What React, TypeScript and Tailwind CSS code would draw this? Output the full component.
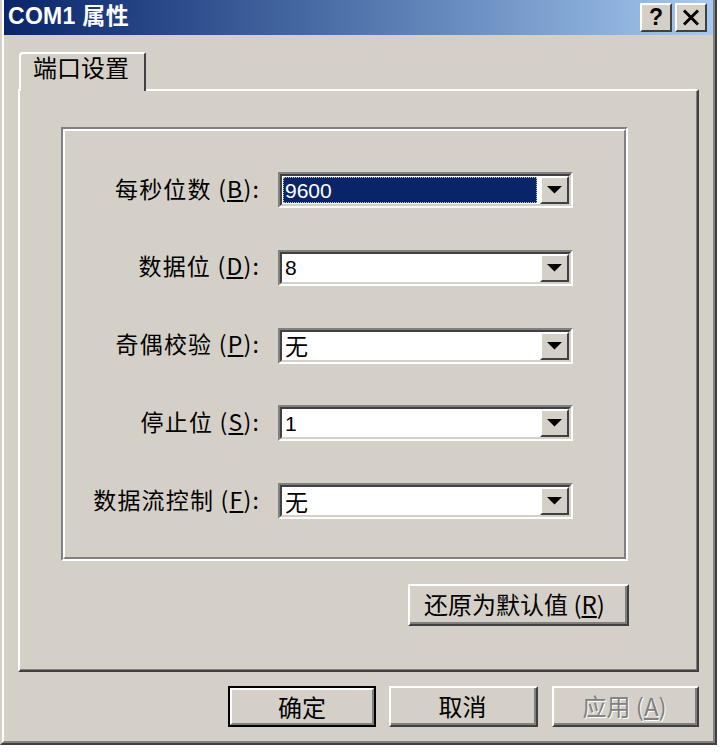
import React from "react";

const CJK = "font-['Noto_Sans_CJK_SC','Liberation_Sans',sans-serif]";

function Arrow() {
  return (
    <svg width="15" height="8" viewBox="0 0 15 8">
      <path d="M0 0H15L7.5 7.5Z" fill="#000" />
    </svg>
  );
}

function Combo({ value, selected, cjk }: { value: string; selected?: boolean; cjk?: boolean }) {
  return (
    <div className="ml-[18px] w-[295px] h-[36px] border-2 border-t-[#808080] border-l-[#808080] border-b-white border-r-white">
      <div className="h-full border-2 border-t-[#404040] border-l-[#404040] border-b-[#d4d0c8] border-r-[#d4d0c8] bg-white flex">
        {selected ? (
          <div className="flex-1 my-[1px] ml-[1px] mr-[3px] bg-[#0a246a] border border-dotted border-[#c0c0c0] flex items-center pl-[1px] text-white font-['Liberation_Sans',sans-serif] text-[21px] leading-none">
            {value}
          </div>
        ) : (
          <div
            className={`flex-1 flex items-center pl-[3px] text-black leading-none ${
              cjk ? `${CJK} text-[23px]` : "font-['Liberation_Sans',sans-serif] text-[21px]"
            }`}
          >
            {value}
          </div>
        )}
        <div className="w-[29px] h-full border-2 border-t-white border-l-white border-b-[#404040] border-r-[#404040] bg-[#d4d0c8] flex items-center justify-center">
          <Arrow />
        </div>
      </div>
    </div>
  );
}

function Row({ label, k, value, selected, cjk }: { label: string; k: string; value: string; selected?: boolean; cjk?: boolean }) {
  return (
    <div className="flex items-center h-[36px]">
      <div className={`w-[195px] text-right whitespace-nowrap text-[23px] tracking-[1.2px] leading-none text-black ${CJK} -mt-[4px]`}>
        {label} (<span className="underline underline-offset-2">{k}</span>):
      </div>
      <Combo value={value} selected={selected} cjk={cjk} />
    </div>
  );
}

function RaisedButton({ children, className, disabled }: { children: React.ReactNode; className: string; disabled?: boolean }) {
  return (
    <div className={`${className} border-2 border-t-white border-l-white border-b-[#404040] border-r-[#404040] bg-[#d4d0c8]`}>
      <div
        className={`h-full border-b-2 border-r-2 border-b-[#808080] border-r-[#808080] flex items-center justify-center text-[24px] leading-none ${CJK} ${
          disabled ? "text-[#808080] [text-shadow:1px_1px_0_#ffffff]" : "text-black"
        }`}
      >
        {children}
      </div>
    </div>
  );
}

export default function App() {
  return (
    <div className="w-[720px] h-[752px] bg-white overflow-hidden">
      <div className="w-[717px] h-[745px] border-l-2 border-l-[#d4d0c8] border-r-2 border-r-[#404040] border-b-2 border-b-[#404040]">
        <div className="h-full border-l-2 border-l-white border-r-2 border-r-[#808080] border-b-2 border-b-[#808080] bg-[#d4d0c8] flex flex-col">
          {/* Title bar */}
          <div className="h-[35px] bg-linear-to-r from-[#0a246a] to-[#a6caf0] flex items-center pl-[4px] pr-[6px]">
            <div className="text-white font-bold text-[23px] tracking-[0.3px] leading-none font-['Liberation_Sans','Noto_Sans_CJK_SC',sans-serif] flex-1 -mt-[2px]">
              COM1 属性
            </div>
            <div className="flex gap-[3px] self-start mt-[3px]">
              <div className="w-[32px] h-[29px] border-2 border-t-white border-l-white border-b-[#404040] border-r-[#404040] bg-[#d4d0c8] flex items-center justify-center font-['Liberation_Sans',sans-serif] font-bold text-[23px] leading-none text-black">
                ?
              </div>
              <div className="w-[32px] h-[29px] border-2 border-t-white border-l-white border-b-[#404040] border-r-[#404040] bg-[#d4d0c8] flex items-center justify-center">
                <svg width="18" height="17" viewBox="0 0 18 17">
                  <path d="M2 1.5L16 15.5M16 1.5L2 15.5" stroke="#000" strokeWidth="3" />
                </svg>
              </div>
            </div>
          </div>

          {/* Tab */}
          <div className="mt-[17px] ml-[15px] w-[127px] h-[39px] -mb-[2px] relative z-10 bg-[#d4d0c8] border-t-2 border-l-2 border-t-white border-l-white border-r-2 border-r-[#404040] rounded-tl-[4px] rounded-tr-[2px] pl-[12px] pt-[1px]">
            <span className={`text-[24px] leading-none text-black ${CJK}`}>端口设置</span>
          </div>

          {/* Panel */}
          <div className="ml-[14px] w-[681px] h-[583px] border-2 border-t-white border-l-white border-b-[#404040] border-r-[#404040]">
            <div className="h-full border-b border-r border-b-[#808080] border-r-[#808080] pl-[41px] pt-[36px]">
              <div className="w-[568px]">
                <div className="w-[567px] h-[434px] border-2 border-t-[#808080] border-l-[#808080] border-b-white border-r-white">
                  <div className="h-full border-2 border-t-white border-l-white border-b-[#808080] border-r-[#808080] pt-[41px] flex flex-col gap-[41.75px]">
                    <Row label="每秒位数" k="B" value="9600" selected />
                    <Row label="数据位" k="D" value="8" />
                    <Row label="奇偶校验" k="P" value="无" cjk />
                    <Row label="停止位" k="S" value="1" />
                    <Row label="数据流控制" k="F" value="无" cjk />
                  </div>
                </div>
                <div className="flex justify-end mt-[23px]">
                  <RaisedButton className="w-[221px] h-[42px]">
                    <span className="pr-[6px]">
                      还原为默认值 (<span className="underline underline-offset-2">R</span>)
                    </span>
                  </RaisedButton>
                </div>
              </div>
            </div>
          </div>

          {/* Bottom buttons */}
          <div className="flex justify-end mt-[14px] pr-[14px]">
            <div className="w-[148px] h-[41px] border-2 border-black mr-[13px]">
              <div className="h-full border-2 border-t-white border-l-white border-b-[#808080] border-r-[#808080] bg-[#d4d0c8] flex items-center justify-center">
                <span className={`text-[24px] leading-none text-black ${CJK}`}>确定</span>
              </div>
            </div>
            <RaisedButton className="w-[149px] h-[41px] mr-[14px]">取消</RaisedButton>
            <RaisedButton className="w-[147px] h-[41px]" disabled>
              应用 (<span className="underline underline-offset-2">A</span>)
            </RaisedButton>
          </div>
        </div>
      </div>
    </div>
  );
}
